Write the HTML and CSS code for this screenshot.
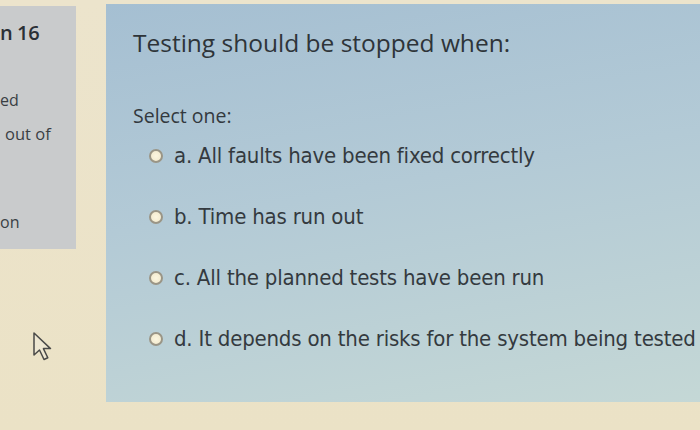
FILE: index.html
```html
<!DOCTYPE html>
<html>
<head>
<meta charset="utf-8">
<link rel="stylesheet" href="styles.css">
</head>
<body>
<div class="page">
  <aside class="info">
    <div class="line qno">n 16</div>
    <div class="line state">ed</div>
    <div class="line marks">out of</div>
    <div class="line flag">on</div>
  </aside>
  <main class="que">
    <h1 class="qtext">Testing should be stopped when:</h1>
    <div class="prompt">Select one:</div>
    <div class="answers">
      <label class="opt"><span class="radio"></span><span class="txt"><span class="num">a.</span> All faults have been fixed correctly</span></label>
      <label class="opt"><span class="radio"></span><span class="txt"><span class="num">b.</span> Time has run out</span></label>
      <label class="opt"><span class="radio"></span><span class="txt"><span class="num">c.</span> All the planned tests have been run</span></label>
      <label class="opt"><span class="radio"></span><span class="txt"><span class="num">d.</span> It depends on the risks for the system being tested</span></label>
    </div>
  </main>
  <svg class="cursor" width="22" height="32" viewBox="0 0 22 32">
    <path d="M2 2 L2 24 L7.5 19 L12 28.5 L15.8 26.8 L11.4 17.6 L18.5 17.6 Z" fill="#eee7d2" stroke="#4a4a48" stroke-width="1.5" stroke-linejoin="round"/>
  </svg>
</div>
</body>
</html>
```
FILE: styles.css
```css
html, body {
  margin: 0;
  padding: 0;
  width: 700px;
  height: 430px;
  overflow: hidden;
  background: #ebe2c7;
}
.page {
  position: relative;
  display: flex;
  align-items: flex-start;
  gap: 30px;
  width: 700px;
  height: 430px;
  overflow: hidden;
  background: linear-gradient(180deg, #ece4cc 0%, #ebe2c6 100%);
}
.info {
  flex: 0 0 76px;
  height: 243px;
  margin-top: 6px;
  background: #c9cbcc;
  overflow: hidden;
  font-family: "Open Sans", "DejaVu Sans", sans-serif;
  color: #3a3f44;
}
.line {
  white-space: nowrap;
}
.qno {
  margin-top: 13px;
  font-size: 20px;
  font-weight: 600;
  letter-spacing: -0.4px;
  color: #2b3036;
}
.state {
  margin-top: 43px;
  font-size: 16px;
}
.marks {
  margin-top: 11px;
  padding-left: 5px;
  font-size: 16.5px;
}
.flag {
  margin-top: 66px;
  font-size: 16px;
}
.que {
  flex: 0 0 640px;
  height: 398px;
  margin-top: 4px;
  box-sizing: border-box;
  padding: 22px 0 0 27px;
  background: linear-gradient(170deg, #a5bfd2 0%, #b3cad6 45%, #c5d8d6 100%);
  color: #30363b;
}
.qtext {
  margin: 0;
  font-family: "Open Sans", "DejaVu Sans", sans-serif;
  font-weight: 400;
  font-size: 24.5px;
  line-height: 34px;
  color: #2e3439;
}
.prompt {
  margin-top: 44px;
  font-family: "Open Sans", "DejaVu Sans", sans-serif;
  font-size: 19.5px;
  line-height: 24px;
  color: #33393e;
}
.answers {
  display: flex;
  flex-direction: column;
  gap: 36px;
  margin-top: 15px;
  padding-left: 16px;
}
.opt {
  display: flex;
  align-items: center;
  gap: 11px;
  height: 25px;
  font-family: "DejaVu Sans Condensed", "DejaVu Sans", sans-serif;
  font-size: 22px;
  color: #343a3f;
  white-space: nowrap;
}
.radio {
  flex: 0 0 auto;
  width: 10px;
  height: 10px;
  border-radius: 50%;
  border: 2px solid #9a9586;
  background: radial-gradient(circle, #fcf6e0 0%, #f0e7ca 100%);
}
.txt {
  letter-spacing: -0.2px;
}
.cursor {
  position: absolute;
  left: 32px;
  top: 331px;
}
```
